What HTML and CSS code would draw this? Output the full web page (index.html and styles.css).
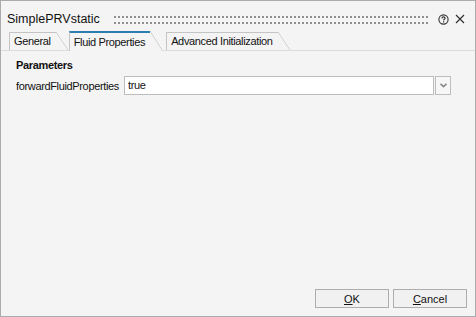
FILE: index.html
```html
<!DOCTYPE html>
<html lang="en">
<head>
  <meta charset="UTF-8">
  <title>SimplePRVstatic</title>
  <link rel="stylesheet" href="styles.css">
</head>
<body>
  <div class="window">
    <div class="titlebar">
      <div class="title">SimplePRVstatic</div>
      <div class="grip"></div>
      <svg class="help" width="11" height="11" viewBox="0 0 11 11">
        <circle cx="5.5" cy="5.5" r="4.6" fill="none" stroke="#333" stroke-width="1.1"/>
        <path d="M3.9 4.4 C3.9 3.4 4.6 2.9 5.5 2.9 C6.4 2.9 7.1 3.4 7.1 4.3 C7.1 5.3 5.6 5.3 5.6 6.5" fill="none" stroke="#333" stroke-width="1.1"/>
        <rect x="5" y="7.3" width="1.2" height="1.2" fill="#333"/>
      </svg>
      <svg class="close" width="10" height="10" viewBox="0 0 10 10">
        <path d="M1 1 L9 9 M9 1 L1 9" stroke="#333" stroke-width="1.2"/>
      </svg>
    </div>

    <div class="tabs">
      <div class="tab">General</div>
      <div class="tab active">Fluid Properties</div>
      <div class="tab">Advanced Initialization</div>
    </div>

    <div class="content">
      <div class="group-title">Parameters</div>
      <div class="param-row">
        <div class="param-label">forwardFluidProperties</div>
        <div class="combo">
          <div class="combo-value">true</div>
          <div class="combo-button">
            <svg width="7" height="5" viewBox="0 0 7 5">
              <path d="M0.5 0.8 L3.5 3.6 L6.5 0.8" fill="none" stroke="#8a8a8a" stroke-width="1.6"/>
            </svg>
          </div>
        </div>
      </div>
    </div>

    <div class="footer">
      <button class="btn"><u>O</u>K</button>
      <button class="btn"><u>C</u>ancel</button>
    </div>
  </div>
</body>
</html>
```

FILE: styles.css
```css
body {
  margin: 0;
  font-family: "Liberation Sans", Arial, sans-serif;
  font-size: 11px;
  letter-spacing: -0.35px;
  color: #111;
}

.window {
  width: 476px;
  height: 317px;
  box-sizing: border-box;
  border: 1px solid #ababab;
  background: #f4f4f4;
  display: flex;
  flex-direction: column;
}

.titlebar {
  display: flex;
  align-items: center;
  height: 24px;
  padding: 6px 10px 0 6px;
}

.title {
  font-size: 12.5px;
  letter-spacing: 0;
  color: #111;
}

.grip {
  flex: 1;
  height: 8px;
  margin: 2px 10px 0 14px;
  background-image: radial-gradient(circle at 1px 1px, #8f8f8f 0.8px, transparent 1.1px);
  background-size: 4px 6px;
}

.help {
  margin-right: 6px;
}

.tabs {
  display: flex;
  align-items: flex-end;
  height: 19px;
  padding-left: 8px;
  border-bottom: 1px solid #dcdcdc;
}

.tab {
  position: relative;
  height: 17px;
  line-height: 17px;
  padding: 0 17px 0 4px;
  margin-right: 1px;
  border-left: 1px solid #c4c4c4;
  border-top: 1px solid #c4c4c4;
}

.tab::after {
  content: "";
  position: absolute;
  top: -1px;
  right: 0;
  bottom: 0;
  width: 12px;
  background: #f4f4f4 linear-gradient(to top right, transparent calc(50% - 0.6px), #c4c4c4 50%, transparent calc(50% + 0.6px));
}

.tab.active {
  height: 18px;
  line-height: 19px;
  margin-right: 4px;
  border-top: 2px solid #2c7fae;
  margin-bottom: -1px;
  background: #f4f4f4;
}

.tab.active::after {
  top: -2px;
  bottom: 1px;
}

.content {
  flex: 1;
  padding: 8px 24px 0 15px;
}

.group-title {
  font-weight: bold;
  margin-bottom: 5px;
}

.param-row {
  display: flex;
  align-items: center;
}

.param-label {
  width: 108px;
}

.combo {
  flex: 1;
  display: flex;
  height: 19px;
}

.combo-value {
  flex: 1;
  background: #fff;
  border: 1px solid #bdbdbd;
  padding-left: 3px;
  line-height: 17px;
}

.combo-button {
  width: 14px;
  border: 1px solid #bdbdbd;
  margin-left: 1px;
  display: flex;
  align-items: center;
  justify-content: center;
  background: #f7f7f7;
}

.footer {
  display: flex;
  justify-content: flex-end;
  gap: 4px;
  padding: 0 8px 8px 0;
}

.btn {
  width: 74px;
  height: 19px;
  padding: 0;
  font-family: "Liberation Sans", Arial, sans-serif;
  font-size: 11px;
  color: #111;
  background: #f1f1f1;
  border: 1px solid #adadad;
  border-radius: 0;
}
```
